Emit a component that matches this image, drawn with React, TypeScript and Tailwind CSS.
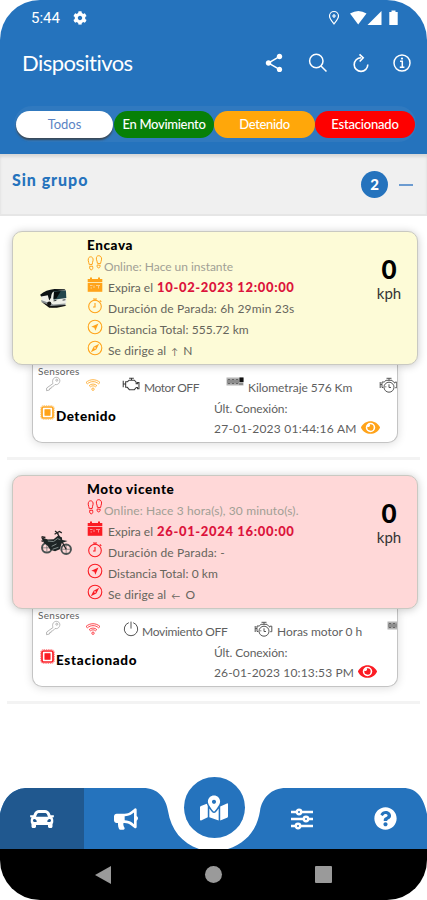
import type { ReactNode } from 'react';
import { FaBullhorn, FaCar, FaCog, FaEye, FaMapMarkedAlt, FaQuestionCircle } from 'react-icons/fa';
import { MdShare } from 'react-icons/md';

interface Sensor {
  icon: ReactNode;
  label: string;
  className: string;
}

interface Device {
  id: number;
  name: string;
  vehicle: 'bus' | 'moto';
  online: string;
  onlineClass: string;
  expires: string;
  stopped: string;
  distance: string;
  arrow: string;
  heading: string;
  speed: number;
  status: string;
  statusClass: string;
  lastConnection: string;
  lastClass: string;
  cardColor: string;
  iconColor: string;
  sensors: Sensor[];
}

function FootstepsIcon() {
  return (
    <svg width="16" height="17" viewBox="0 0 16 17" fill="none" stroke="currentColor" strokeWidth="1">
      <path d="M1.2 5.2C1.2 2.8 2.2 1.8 3.7 1.8s2.6 1.4 2.4 3.4c-.1 1.5-1 2.7-.9 4.2L2.4 9.8C2.2 8.2 1.2 7 1.2 5.2z" />
      <path d="M2.6 11.500l2.900-.4c.6 2 .3 3.400-1 3.700s-2-1.300-1.900-3.300z" />
      <path d="M9.400 4.200C9.200 2 10 .7 11.700.7s3 1.400 2.900 3.400c-.1 1.600-.9 2.900-1.100 4.600l-3.100-.4c.1-1.600-.8-2.700-1-4.100z" />
      <path d="M10.300 9.900l2.900.5c0 1.700-.7 2.700-1.800 2.500-1.300-.3-1.600-1.500-1.100-3z" />
    </svg>
  );
}

function CalendarIcon() {
  return (
    <svg width="16" height="16" viewBox="0 0 16 16">
      <path d="M1 2h2V.5h2V2h6V.5h2V2h2.300v3H.700V2z" fill="currentColor" />
      <path d="M.700 5.800h14.600v9H.700z" fill="currentColor" />
      <path d="M3 8.500h2.500M3.500 11h1.500M7 8.500v2.500M9 8.500h4M11.500 9v2.500" stroke="#fff" strokeOpacity=".5" fill="none" />
    </svg>
  );
}

function StopwatchIcon() {
  return (
    <svg width="16" height="16" viewBox="0 0 16 16" fill="none" stroke="currentColor" strokeWidth="1.1">
      <circle cx="8" cy="8.500" r="6.300" />
      <path d="M6 1h4M8 1v1.500M8 5v4H6M12.800 2.500l1.500 1.400" />
    </svg>
  );
}

function LocationArrowIcon() {
  return (
    <svg width="16" height="16" viewBox="0 0 16 16" fill="none" stroke="currentColor" strokeWidth="1.1">
      <circle cx="8" cy="8" r="6.800" />
      <path d="M11.500 4.400L4.300 7.800l3.100.9.9 3.100z" fill="currentColor" stroke="none" />
    </svg>
  );
}

function CompassIcon() {
  return (
    <svg width="16" height="16" viewBox="0 0 16 16" fill="none" stroke="currentColor" strokeWidth="1.1">
      <circle cx="8" cy="8" r="6.800" />
      <path d="M12.200 3.800L9.300 9.400 3.800 12.200 6.600 6.700z" fill="currentColor" stroke="none" />
      <circle cx="8" cy="8" r=".8" fill="#fff" stroke="none" />
    </svg>
  );
}

function KeyIcon() {
  return (
    <svg width="16" height="16" viewBox="0 0 16 16" fill="none" stroke="#b5b5b5" strokeWidth="1">
      <path d="M8 7.500C6.800 4.500 8.300 1.500 11.200 1.300c3 0 4.400 2.800 3.200 5.200-.9 1.800-2.700 2.500-4.400 2L7.500 11l-1.300.2-.2 1.300-1.400.2-.2 1.300-2.900.7.200-2.700z" />
      <circle cx="11.800" cy="4.200" r="1" />
    </svg>
  );
}

function WifiIcon() {
  return (
    <svg width="16" height="14" viewBox="0 0 16 14" fill="none" stroke="currentColor" strokeWidth=".8">
      <path d="M1 4.500C5 .8 11 .8 15 4.500l-1.400 1.300C10.300 2.900 5.700 2.900 2.400 5.800zM4.200 7.600c2.300-2 5.300-2 7.600 0L10.500 8.800c-1.500-1.300-3.500-1.300-5 0z" />
      <circle cx="8" cy="11.200" r="1.200" />
    </svg>
  );
}

function EngineIcon() {
  return (
    <svg width="18" height="15" viewBox="0 0 19 16" fill="none" stroke="#3c3c3c" strokeWidth="1.1">
      <path d="M1.200 4v7M1.200 7.500h2.600M3.800 5h2l1.700-1.600h5.600l1.900 2.200v1.600h1.400V6h1.600v6.500h-1.600v-1.300h-1.300l-2 2.300H7.700L5.600 11H3.800zM7.500 1.300h5M10 1.300v2" />
    </svg>
  );
}

function OdometerIcon() {
  return (
    <svg width="18" height="10" viewBox="0 0 18 10">
      <path d="M.5.5h17v8H.5z" fill="#b4b4b4" />
      <path d="M13.500.5h4v4.500h-4z" fill="#111" />
      <path d="M2 2.500h2v4H2zM6 2.500h2v4H6zM10 2.500h2v4h-2zM13 7h4" fill="none" stroke="#555" strokeWidth=".8" />
    </svg>
  );
}

function EngineHoursIcon() {
  return (
    <svg width="19" height="17" viewBox="0 0 19 17" fill="none" stroke="#555" strokeWidth="1">
      <path d="M1.200 5v6M1.200 7.500H3V5h2.200L7 3.300h6l1.500 1.800 1.300 1V5.200h2v5.500h-1.600M7.500 1.300h5M10 1.300v2M3 7.500v3h1.300" />
      <circle cx="10" cy="10.200" r="5" fill="#fff" />
      <path d="M10 7.300v3.200h2M6.300 9.800h1" />
    </svg>
  );
}

function PowerIcon() {
  return (
    <svg width="16" height="16" viewBox="0 0 16 16" fill="none" stroke="#555" strokeWidth="1">
      <path d="M5.800 1.700a6.700 6.700 0 1 0 4.400 0M8 .6v7" />
    </svg>
  );
}

function ChipIcon() {
  return (
    <svg width="15" height="15" viewBox="0 0 15 15" fill="none" stroke="currentColor">
      <rect x=".5" y=".5" width="14" height="14" rx="3" strokeOpacity=".45" strokeDasharray="1.500 .8" />
      <rect x="2" y="2" width="11" height="11" rx="1.500" strokeWidth="1.700" />
      <rect x="4.900" y="4.700" width="5.200" height="5.600" fill="currentColor" strokeWidth=".8" />
    </svg>
  );
}

function BusPicture() {
  return (
    <svg width="28" height="21" viewBox="0 0 29 22">
      <path d="M.5 7.500L9 2.200 25 1l2 1.500.5 12.500-2 3-14 1.500L2 14.500z" fill="#efefe8" />
      <path d="M0 7C4 3.500 9 1.600 15 1l10.500.3 1.300 1L15 3.300c-3 .7-3.500 4.700-3.500 6.700L9.500 13 8 7.500 1 9z" fill="#0d1214" />
      <path d="M14.500 3.500l12.500-.8.4 7.800-13.400 1.700z" fill="#23464c" />
      <path d="M14.500 4l7-.5-4.500 7.500-3 .4z" fill="#080c0e" />
      <path d="M1 12.500l10 3.800 3 .9 12.500-1v2.300l-14 2L1.500 15z" fill="#8d9496" />
      <path d="M2 14.800l9.500 4 14-1 2 .8-10 2.200-8-.2z" fill="#111" />
      <path d="M14 13.500l3-.5M23.500 12.700l3-.4" stroke="#30373a" />
      <circle cx="9.500" cy="16.300" r="2.200" fill="#111" />
    </svg>
  );
}

function MotoPicture() {
  return (
    <svg width="33" height="27" viewBox="0 0 34 28">
      <g fill="none" stroke="#4a5252">
        <circle cx="7" cy="19.500" r="5" strokeWidth="2" />
        <circle cx="27" cy="21" r="5" strokeWidth="2" />
        <path d="M7 15v9M3 19.500h8M27 16v9M23 21h8" strokeWidth=".6" />
        <path d="M18 4.500L27 21M15.500 2l3.500 3M15 5.500l5-3 2.500 1.500" stroke="#222" strokeWidth="1.300" />
      </g>
      <path d="M1 8.500l7 2.500 6-.5 4.500-3.500 4 1.500.5 3 5.500 1-6 2-2 6.500-5 2-5-1.500-2.500-4L4 14.500z" fill="#1d2525" />
      <path d="M8 12.500l6 .5 4-3 3 1M12 18l5-2.500M13 21l6-2" stroke="#84908e" strokeWidth="1" fill="none" />
      <path d="M1.500 8l4 .8M3 13l-1.500-1" stroke="#222" strokeWidth="1.400" />
    </svg>
  );
}

const devices: Device[] = [
  {
    id: 1,
    name: 'Encava',
    vehicle: 'bus',
    online: 'Online: Hace un instante',
    onlineClass: 'tracking-[-0.03px]',
    expires: '10-02-2023 12:00:00',
    stopped: '6h 29min 23s',
    distance: '555.72 km',
    arrow: '↑',
    heading: 'N',
    speed: 0,
    status: 'Detenido',
    statusClass: 'tracking-[0.5px]',
    lastConnection: '27-01-2023 01:44:16 AM',
    lastClass: 'tracking-[0.24px]',
    cardColor: 'bg-[#fdfbd7]',
    iconColor: 'text-[#ffa31a]',
    sensors: [
      { icon: <EngineIcon />, label: 'Motor OFF', className: 'w-[104px] -ml-[1px] gap-[4px] tracking-[-0.45px]' },
      { icon: <OdometerIcon />, label: 'Kilometraje 576 Km', className: 'w-[153px] gap-[4px] tracking-[-0.05px]' },
      { icon: <EngineHoursIcon />, label: '', className: 'w-[19px]' },
    ],
  },
  {
    id: 2,
    name: 'Moto vicente',
    vehicle: 'moto',
    online: 'Online: Hace 3 hora(s), 30 minuto(s).',
    onlineClass: 'tracking-[0.13px]',
    expires: '26-01-2024 16:00:00',
    stopped: '-',
    distance: '0 km',
    arrow: '←',
    heading: 'O',
    speed: 0,
    status: 'Estacionado',
    statusClass: 'tracking-[0.7px]',
    lastConnection: '26-01-2023 10:13:53 PM',
    lastClass: 'tracking-[0.15px]',
    cardColor: 'bg-[#ffd8d8]',
    iconColor: 'text-[#fb1c24]',
    sensors: [
      { icon: <PowerIcon />, label: 'Movimiento OFF', className: 'w-[132px] gap-[3px] tracking-[-0.3px]' },
      { icon: <EngineHoursIcon />, label: 'Horas motor 0 h', className: 'w-[133px] gap-[4px] -ml-[1px] tracking-[-0.05px]' },
      { icon: <OdometerIcon />, label: '', className: 'w-[19px]' },
    ],
  },
];

const filters = [
  { label: 'Todos', className: 'mr-[1px] w-[97px] bg-white text-[#5b84c4] shadow-[0_2px_2px_rgba(60,60,60,0.8)]' },
  { label: 'En Movimiento', className: 'w-[100px] bg-[#078007] font-medium tracking-[-0.3px] text-white' },
  { label: 'Detenido', className: 'w-[101px] bg-[#ffa70a] font-medium tracking-[-0.35px] text-white' },
  { label: 'Estacionado', className: 'w-[100px] bg-[#fe0000] font-medium tracking-[-0.2px] text-white' },
];

function InfoRow({ icon, iconColor, children }: { icon: ReactNode; iconColor: string; children: ReactNode }) {
  return (
    <div className="flex h-[21px] items-center whitespace-nowrap text-[12px] text-[#66655c]">
      <span className={`mb-[6px] w-[21px] shrink-0 ${iconColor}`}>{icon}</span>
      <span>{children}</span>
    </div>
  );
}

function DeviceCard({ device }: { device: Device }) {
  return (
    <div className="mx-[7px] h-[244px] border-b-3 border-[#f3f3f3] pt-[15px]">
      <div
        className={`relative z-10 ml-[5px] flex h-[134px] w-[406px] rounded-[10px] border border-[#c9c9c2] shadow-[0_1px_8px_rgba(0,0,0,0.22)] ${device.cardColor}`}
      >
        <div className="flex w-[74px] shrink-0 items-center pl-[27px]">
          {device.vehicle === 'bus' ? <BusPicture /> : <MotoPicture />}
        </div>
        <div className="flex-1 pt-[3px]">
          <div className="h-[21px] text-[13.5px] font-black leading-[21px] tracking-[0.6px] text-black">{device.name}</div>
          <div className="flex h-[21px] items-center whitespace-nowrap">
            <span className={`mb-[6px] w-[17px] shrink-0 ${device.iconColor}`}>
              <FootstepsIcon />
            </span>
            <span className={`text-[12px] text-[#a19f95] ${device.onlineClass}`}>{device.online}</span>
          </div>
          <InfoRow icon={<CalendarIcon />} iconColor={device.iconColor}>
            Expira el <b className="ml-[1px] text-[13px] font-black tracking-[0.65px] text-[#dc143c]">{device.expires}</b>
          </InfoRow>
          <InfoRow icon={<StopwatchIcon />} iconColor={device.iconColor}>
            <span className="tracking-[0.15px]">Duración de Parada: {device.stopped}</span>
          </InfoRow>
          <InfoRow icon={<LocationArrowIcon />} iconColor={device.iconColor}>
            <span className="tracking-[0.05px]">Distancia Total: {device.distance}</span>
          </InfoRow>
          <InfoRow icon={<CompassIcon />} iconColor={device.iconColor}>
            <span className="tracking-[0.1px]">Se dirige al</span>{' '}
            <span className="mx-[2px] inline-block text-[9px]">{device.arrow}</span> {device.heading}
          </InfoRow>
        </div>
        <div className="flex w-[56px] flex-col items-center pt-[23px] text-black">
          <span className="text-[26px] font-black leading-[28px]">{device.speed}</span>
          <span className="text-[15px] leading-[20px] text-[#333]">kph</span>
        </div>
      </div>

      {/* Sensores y ultima conexion */}
      <div className="ml-[25px] h-[78px] w-[366px] overflow-hidden rounded-b-[10px] border border-t-0 border-[#c4c4c4] bg-white text-[#5f5f5f] shadow-[0_1px_10px_rgba(0,0,0,0.14)]">
        <div className="h-[11px] pl-[5px] text-[10px] leading-[13px] tracking-[0.3px]">Sensores</div>
        <div className={`flex h-[24px] items-start whitespace-nowrap pl-[12px] ${device.iconColor}`}>
          <span className="w-[40px] shrink-0">
            <KeyIcon />
          </span>
          <span className="w-[38px] shrink-0 pt-[2px] pr-[1px]">
            <WifiIcon />
          </span>
          {device.sensors.map((sensor, i) => (
            <span key={i} className={`flex shrink-0 text-[12px] text-[#5f5f5f] ${sensor.className}`}>
              <span className="pt-px">{sensor.icon}</span>
              <span className="pt-[3px]">{sensor.label}</span>
            </span>
          ))}
        </div>
        <div className="flex">
          <div className={`flex w-[175px] gap-[1px] pl-[7px] pt-[5px] ${device.iconColor}`}>
            <ChipIcon />
            <span className={`text-[13.5px] font-black leading-[22px] text-black ${device.statusClass}`}>
              {device.status}
            </span>
          </div>
          <div className="pl-[6px] text-[12px] leading-[18px]">
            <div className="tracking-[-0.1px]">Últ. Conexión:</div>
            <div className="flex items-center gap-[4px] whitespace-nowrap">
              <span className={device.lastClass}>{device.lastConnection}</span>
              <FaEye size={19} className={`mb-[3px] ${device.iconColor}`} />
            </div>
          </div>
        </div>
      </div>
    </div>
  );
}

function StatusBar() {
  return (
    <div className="flex h-[36px] items-center pl-[31px] text-white">
      <span className="font-[Roboto] text-[15px]">5:44</span>
      <FaCog size={14} className="ml-[13px]" />
      <svg className="ml-auto" width="12" height="16" viewBox="0 0 12 16" fill="none" stroke="#fff" strokeWidth="1.2">
        <path d="M6 14C3.500 10.800 1.500 8.600 1.500 6a4.500 4.500 0 0 1 9 0C10.500 8.600 8.500 10.800 6 14z" />
        <path d="M6 4v4M4 6h4" />
      </svg>
      <svg className="ml-[10px]" width="50" height="16" viewBox="0 0 50 16" fill="#fff">
        <path d="M0 3.500Q8.500-1.500 16.500 3.500L8.200 14.500z" />
        <path d="M31.500 1v14h-14z" />
        <path d="M41.500.5h4V2h2.200v13H39.300V2h2.200z" />
      </svg>
      <span className="w-[27px]" />
    </div>
  );
}

function AppBar() {
  return (
    <div className="flex h-[54px] items-center pl-[22px] text-white">
      <h1 className="mb-[2px] text-[22px] tracking-[-0.55px]">Dispositivos</h1>
      <div className="ml-auto flex items-center gap-[23px] pr-[15px]">
        <MdShare size={22} />
        <svg width="20" height="20" viewBox="0 0 20 20" fill="none" stroke="#fff" strokeWidth="1.500">
          <circle cx="8.300" cy="8" r="6.700" />
          <path d="M13 13l5.500 5.500" />
        </svg>
        <svg width="20" height="20" viewBox="0 0 20 20" fill="none" stroke="#fff" strokeWidth="1.600">
          <path d="M10 4.800A6.800 6.800 0 1 0 16.800 11.500" />
          <path d="M8.500 1.300l3.700 3.500-3.500 3.700" />
        </svg>
        <svg className="-ml-[2px]" width="20" height="20" viewBox="0 0 20 20" fill="none" stroke="#fff" strokeWidth="1.500">
          <circle cx="10" cy="10" r="8" />
          <path d="M8 8.300h2.300V14M7.800 14.200h4.600" />
          <circle cx="10" cy="5.600" r="1.100" fill="#fff" stroke="none" />
        </svg>
      </div>
    </div>
  );
}

function BottomNav() {
  return (
    <div className="relative h-[73px]">
      <svg className="absolute inset-0" width="427" height="73" viewBox="0 0 427 73">
        <path
          d="M0 73V38C4 20 14 12 28 12H143C158 12 166 22 168 35C171 54 182 67 199 73zM228 73C246 67 257 54 260 35C262 22 271 12 286 12H403C417 12 424 22 427 38V73z"
          fill="#2573bd"
        />
        <path d="M0 73V38C4 20 14 12 28 12H84V73z" fill="#20588f" />
      </svg>
      <div className="relative flex h-[73px] pt-[12px] text-white">
        <div className="flex w-[84px] items-center justify-center">
          <FaCar size={24} />
        </div>
        <div className="flex w-[84px] items-center justify-center">
          <FaBullhorn size={24} />
        </div>
        <div className="-mt-[11px] flex w-[92px] justify-center">
          <div className="flex h-[61px] w-[61px] items-center justify-center rounded-full bg-[#2573bd]">
            <FaMapMarkedAlt size={28} />
          </div>
        </div>
        <div className="flex w-[84px] items-center justify-center">
          <svg width="24" height="24" viewBox="0 0 24 24" fill="#2573bd" stroke="#fff" strokeWidth="2.400">
            <path d="M1 5h22M1 12h22M1 19h22" />
            <circle cx="9" cy="5" r="2.200" />
            <circle cx="16" cy="12" r="2.200" />
            <circle cx="8" cy="19" r="2.200" />
          </svg>
        </div>
        <div className="flex w-[83px] items-center justify-center">
          <FaQuestionCircle size={23} />
        </div>
      </div>
    </div>
  );
}

export default function App() {
  return (
    <div className="h-[900px] w-[427px] overflow-hidden bg-white">
      <div className="flex h-[900px] w-[427px] flex-col overflow-hidden rounded-[40px] bg-white font-[Lato,sans-serif]">
        <header className="h-[154px] shrink-0 bg-[#2573bd]">
          <StatusBar />
          <AppBar />
          <div className="mt-[16px] ml-[14px] flex h-[36px] w-[402px] items-center rounded-full bg-[#3079bf] pl-[2px]">
            {filters.map((filter) => (
              <button
                key={filter.label}
                className={`h-[27px] shrink-0 rounded-full pt-px text-[13px] ${filter.className}`}
              >
                {filter.label}
              </button>
            ))}
          </div>
        </header>

        <div className="flex h-[62px] shrink-0 items-center border-b-2 border-[#e6e6e6] bg-[#f0f0f0] pl-[12px] pr-[14px] shadow-[inset_0_3px_3px_rgba(0,0,0,0.1)]">
          <span className="mb-[9px] text-[16px] font-black tracking-[0.95px] text-[#2573bd]">Sin grupo</span>
          <span className="ml-auto flex h-[27px] w-[27px] items-center justify-center rounded-full bg-[#2573bd] text-[15px] font-black text-white">
            2
          </span>
          <span className="ml-[11px] mt-[2px] h-[2px] w-[14px] bg-[#6c9bd0]" />
        </div>

        <main className="flex-1">
          {devices.map((device) => (
            <DeviceCard key={device.id} device={device} />
          ))}
        </main>

        <BottomNav />
        <div className="flex h-[51px] shrink-0 items-center justify-between bg-black pl-[95px] pr-[95px]">
          <svg width="16" height="18" viewBox="0 0 16 18" fill="#9a9a9a">
            <path d="M16 0v18L0 9z" />
          </svg>
          <span className="h-[17px] w-[17px] rounded-full bg-[#9a9a9a]" />
          <span className="h-[17px] w-[17px] rounded-[1px] bg-[#9a9a9a]" />
        </div>
      </div>
    </div>
  );
}
